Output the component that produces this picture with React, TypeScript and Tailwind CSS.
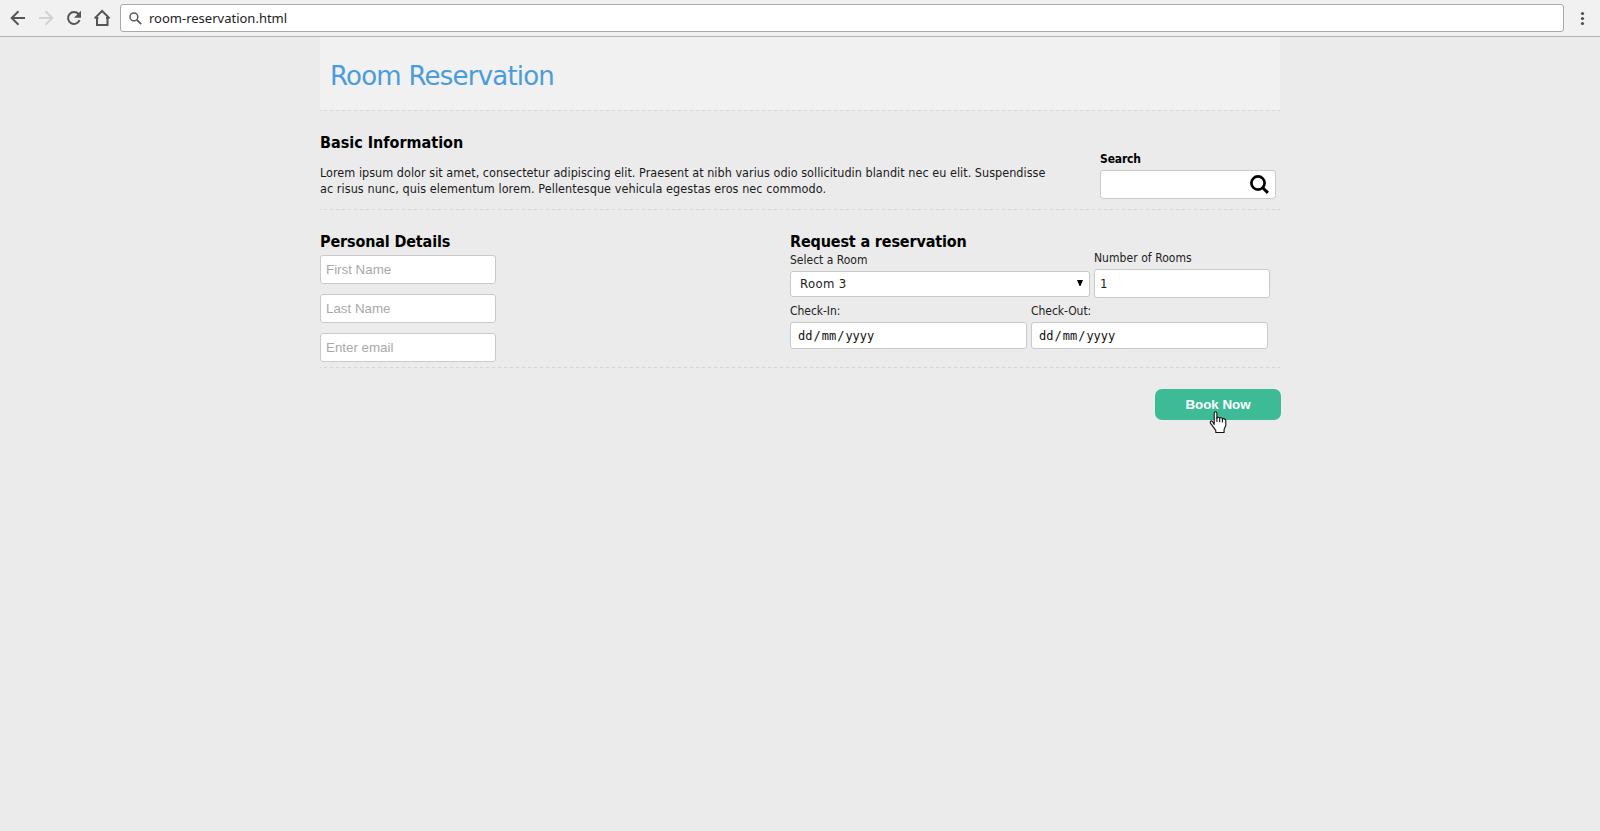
import type { ReactNode } from 'react';

const field = 'block rounded-[3px] border border-[#c9c9c9] bg-white outline-none';

function Toolbar() {
  return (
    <header className="flex h-[37px] shrink-0 items-start border-b border-[#b2b2b2] bg-[#f1f1f1]">
      <svg className="block h-9 w-[120px] shrink-0" viewBox="0 0 120 36" fill="none" stroke="#555" strokeWidth="2">
        <path d="M25 18H12M18.5 11.2L11.7 18l6.8 6.8" />
        <path stroke="#d2d2d2" d="M39 18h13M45.5 11.2l6.8 6.8-6.8 6.8" />
        <path d="M79.6 20.2A6 6 0 1 1 78.6 14" />
        <path fill="#555" stroke="none" d="M81 10.8v7h-7z" />
        <path d="M97 17.5V25h10.5V17.5M94.6 18.4l7.5-7.4 7.5 7.4M96 17.9h2.4M106 17.9h2.4" strokeLinejoin="miter" />
      </svg>
      <div className="mt-1 flex h-7 w-[1444px] items-center rounded-[3px] border border-[#a9a9a9] bg-white pl-2">
        <svg className="h-[13px] w-[13px]" viewBox="0 0 13 13" fill="none" stroke="#5c5c5c" strokeWidth="1.5">
          <circle cx="4.9" cy="4.9" r="3.9" />
          <path d="M7.8 7.8l4.4 4.4" strokeWidth="1.8" />
        </svg>
        <span className="ml-[7px] font-['Noto_Sans',sans-serif] text-[13px] leading-5 text-[#222]">room-reservation.html</span>
      </div>
      <svg className="ml-4 block h-9 w-5" viewBox="0 0 20 36" fill="#505050">
        <circle cx="2.5" cy="13.5" r="1.6" />
        <circle cx="2.5" cy="18.5" r="1.6" />
        <circle cx="2.5" cy="23.5" r="1.6" />
      </svg>
    </header>
  );
}

function DashedRule() {
  return (
    <div className="h-px bg-[repeating-linear-gradient(90deg,#d5d5d5_0_1px,transparent_1px_4px,#d5d5d5_4px_6px)]" />
  );
}

function Heading({ children }: { children: ReactNode }) {
  return <h2 className="text-base leading-5 font-bold whitespace-nowrap">{children}</h2>;
}

function DateField({ label }: { label: string }) {
  return (
    <div className="w-[237px]">
      <div className="text-xs leading-4 tracking-[-0.05px] text-[#222]">{label}</div>
      <div className={`${field} mt-[3px] flex h-[27px] items-center pl-1.5 font-['DejaVu_Sans_Mono',monospace] text-xs leading-4 text-[#111]`}>
        <span className="px-px">dd</span>
        <span>/</span>
        <span className="px-px">mm</span>
        <span>/</span>
        <span className="px-px">yyyy</span>
      </div>
    </div>
  );
}

function HandCursor() {
  return (
    <svg className="absolute top-[22px] left-[54px] h-[23px] w-[18px]" viewBox="0 0 18 23" strokeLinejoin="round">
      <path
        d="M5.2 13.5V2.2C5.2.3 7.9.3 7.9 2.2V7.3C8.3 5.8 10.5 6.1 10.7 7.2 11.3 6.3 13.1 6.7 13.4 7.9 14.4 7.3 16.8 7.8 16.8 9.8V14.6L15.1 18.3V21.5H6.8V19.3L1.6 12.4C.5 10.5 2.1 9.3 3.4 10.4Z"
        fill="#fff"
        stroke="#111"
        strokeWidth="1.1"
      />
      <path d="M7.9 6.5v4.4M10.7 7.2v4M13.4 8v3.4" stroke="#111" strokeWidth="1.1" />
    </svg>
  );
}

export default function App() {
  return (
    <div className="flex h-[831px] flex-col bg-[#ebebeb] font-['DejaVu_Sans_Condensed','DejaVu_Sans',sans-serif] text-black">
      <Toolbar />
      <main className="mx-auto w-[960px]">
        <div className="h-[73px] bg-[#f1f1f1] pt-[19px] pl-2.5">
          <h1 className="font-['DejaVu_Sans',sans-serif] text-[26px] leading-10 tracking-[-0.78px] text-[#4a9cdb]">
            Room Reservation
          </h1>
        </div>
        <DashedRule />

        <section className="flex h-[98px] justify-between pt-[22px] pr-1">
          <div>
            <Heading>Basic Information</Heading>
            <p className="mt-3 text-[12.5px] leading-4 tracking-[0.03px] whitespace-nowrap text-[#1a1a1a]">
              Lorem ipsum dolor sit amet, consectetur adipiscing elit. Praesent at nibh varius odio sollicitudin blandit nec eu elit. Suspendisse
              <br />
              <span className="tracking-[0.07px]">ac risus nunc, quis elementum lorem. Pellentesque vehicula egestas eros nec commodo.</span>
            </p>
          </div>
          <div className="w-44 pt-[18px]">
            <label className="block text-xs leading-4 font-bold tracking-[-0.15px]">Search</label>
            <div className={`${field} mt-[3px] flex h-[29px] items-center justify-end pr-1.5`}>
              <svg className="h-[19px] w-[19px]" viewBox="0 0 19 19" fill="none" stroke="#000">
                <circle cx="8" cy="8" r="6.6" strokeWidth="2.7" />
                <path d="M12.7 12.7l5.2 5.2" strokeWidth="3" />
              </svg>
            </div>
          </div>
        </section>
        <DashedRule />

        <section className="flex h-[157px] pt-[22px]">
          <div className="w-[470px] tracking-[-0.15px]">
            <Heading>Personal Details</Heading>
            <div className="mt-[3px] flex flex-col gap-2.5 tracking-normal">
              {['First Name', 'Last Name', 'Enter email'].map((name) => (
                <input
                  key={name}
                  placeholder={name}
                  className={`${field} h-[29px] w-44 px-[5px] font-['Liberation_Sans',sans-serif] text-[13.33px] placeholder:text-[#a9a9a9]`}
                />
              ))}
            </div>
          </div>
          <div>
            <div className="tracking-[-0.15px]">
              <Heading>Request a reservation</Heading>
            </div>
            <div className="-mt-0.5 flex items-start gap-1">
              <div className="w-[300px] pt-0.5">
                <div className="text-xs leading-4 text-[#222]">Select a Room</div>
                <div className={`${field} mt-[3px] flex h-[26px] items-center justify-between pr-1.5 pl-[9px]`}>
                  <span className="text-[13px] leading-4 tracking-[0.35px] text-[#222]">Room 3</span>
                  <svg className="mb-0.5 h-1.5 w-1.5" viewBox="0 0 6 6">
                    <path d="M0 0h6L3.5 6h-1z" />
                  </svg>
                </div>
              </div>
              <div className="w-44">
                <div className="text-xs leading-4 tracking-[0.05px] text-[#222]">Number of Rooms</div>
                <div className={`${field} mt-[3px] flex h-[29px] items-center pl-[5px] text-[13px] leading-4 text-[#222]`}>1</div>
              </div>
            </div>
            <div className="mt-[5px] flex gap-1">
              <DateField label="Check-In:" />
              <DateField label="Check-Out:" />
            </div>
          </div>
        </section>
        <DashedRule />

        <div className="-mr-px flex justify-end pt-[21px]">
          <div className="relative">
            <button className="block h-[31px] w-[126px] rounded-[7px] bg-[#3dbb96] pt-px font-['Liberation_Sans',sans-serif] text-[13.33px] font-bold text-white">
              Book Now
            </button>
            <HandCursor />
          </div>
        </div>
      </main>
    </div>
  );
}
